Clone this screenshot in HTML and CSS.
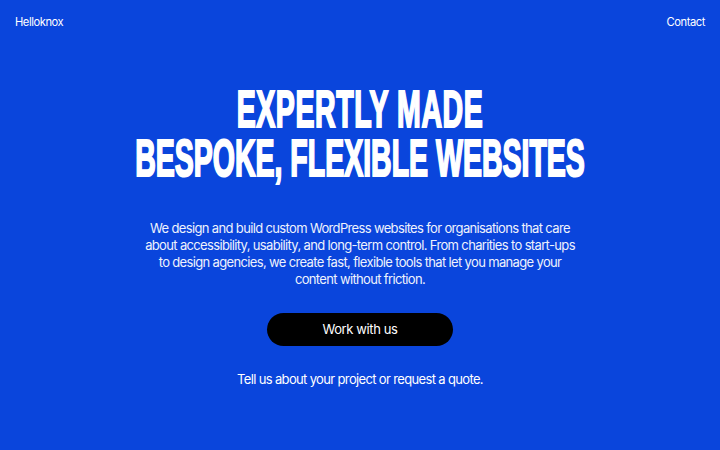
FILE: index.html
```html
<!DOCTYPE html>
<html lang="en">
<head>
    <meta charset="UTF-8">
    <meta name="viewport" content="width=device-width, initial-scale=1.0">
    <title>Helloknox</title>
    <link rel="stylesheet" href="styles.css">
</head>
<body>

    <header class="nav">
        <a href="#" class="brand">Helloknox</a>
        <a href="#" class="nav-link">Contact</a>
    </header>

    <main class="hero">
        <h1 class="hero-title">
            <span>Expertly made</span>
            <span>Bespoke, flexible websites</span>
        </h1>

        <p class="hero-text">We design and build custom WordPress websites for organisations that care about accessibility, usability, and long-term control. From charities to start-ups to design agencies, we create fast, flexible tools that let you manage your content without friction.</p>

        <a href="#" class="btn">Work with us</a>

        <p class="hero-note">Tell us about your project or request a quote.</p>
    </main>

</body>
</html>
```

FILE: styles.css
```css
body {
    margin: 0;
    background-color: #0a45dc;
    color: #fff;
    font-family: Inter, "Noto Sans", sans-serif;
    font-size: 13px;
    letter-spacing: -0.05em;
}
a {
    color: #fff;
    text-decoration: none;
}
.nav {
    display: flex;
    justify-content: space-between;
    align-items: center;
    padding: 14px 15px 12px;
    font-size: 11.2px;
    letter-spacing: -0.04em;
    line-height: 17px;
}
.hero {
    display: flex;
    flex-direction: column;
    align-items: center;
    text-align: center;
    padding-top: 43px;
}
/* narrow face stretched tall to get a condensed display look */
.hero-title {
    margin: 0;
    font-family: "Liberation Sans Narrow", "Liberation Sans", sans-serif;
    font-weight: 700;
    font-size: 28.5px;
    line-height: 27.2px;
    letter-spacing: 0;
    text-transform: uppercase;
    -webkit-text-stroke: 1.2px #fff;
    transform: scaleY(1.8);
    transform-origin: center top;
}
.hero-title span {
    display: block;
}
.hero-title span:first-child {
    letter-spacing: 0.02em;
}
.hero-text {
    max-width: 440px;
    margin: 80px 0 0;
    line-height: 17px;
    color: #eef2fd;
}
.btn {
    display: block;
    width: 186px;
    margin-top: 25px;
    padding: 8px 0;
    border-radius: 17px;
    background-color: #000;
    font-size: 13px;
    letter-spacing: -0.03em;
    line-height: 17px;
}
.hero-note {
    margin: 25px 0 0;
    line-height: 17px;
}
```
